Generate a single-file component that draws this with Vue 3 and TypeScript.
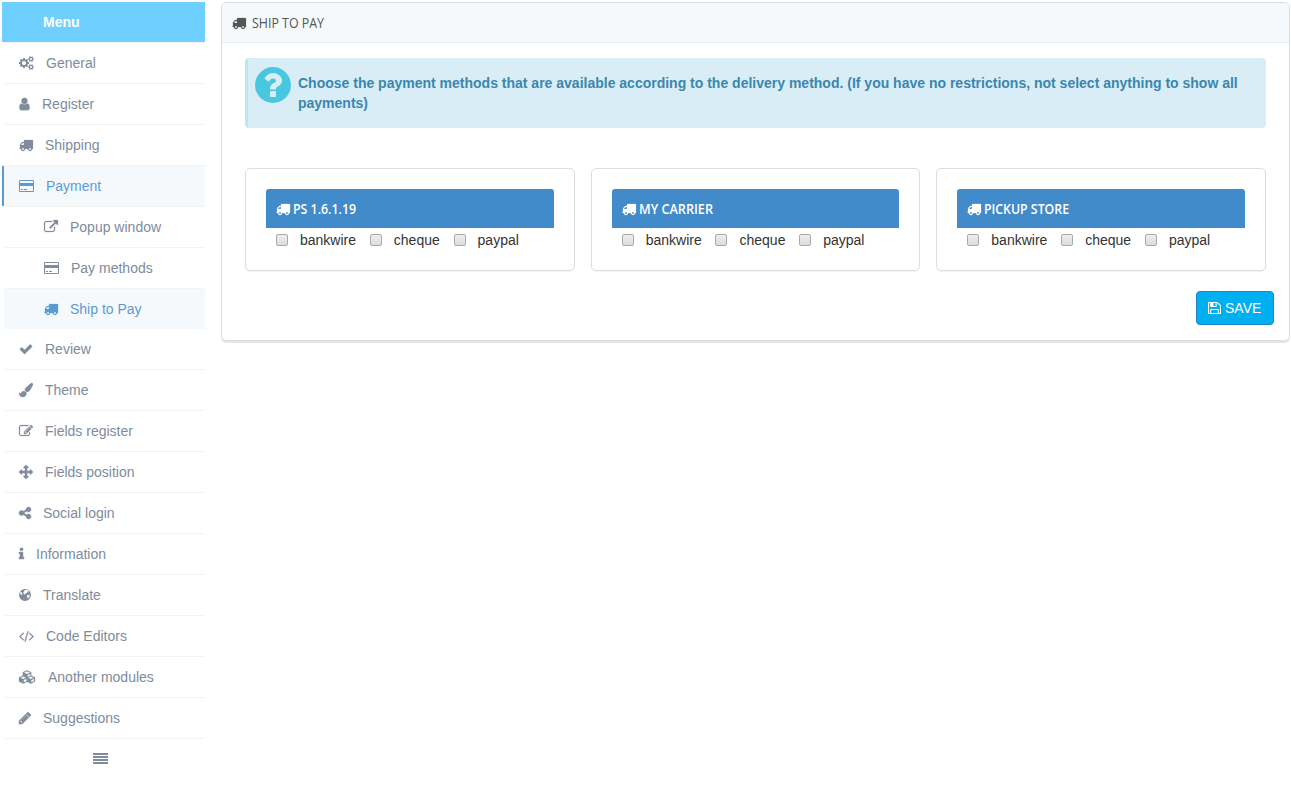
<script setup lang="ts">
import { ref } from 'vue'

interface Glyph { box: string; w: number; d: string }
interface Item { icon: string; label: string; state?: string }

const glyphs: Record<string, Glyph> = {
  truck: { box: '0 0 1792 1792', w: 14, d: 'M640 1408q0-52-38-90t-90-38-90 38-38 90 38 90 90 38 90-38 38-90zm-384-512h384v-256h-158q-13 0-22 9l-195 195q-9 9-9 22v30zm1280 512q0-52-38-90t-90-38-90 38-38 90 38 90 90 38 90-38 38-90zm256-1088v1024q0 15-4 26.5t-13.5 18.5-16.5 11.5-23.5 6-22.5 2-25.5 0-22.5-.5q0 106-75 181t-181 75-181-75-75-181h-384q0 106-75 181t-181 75-181-75-75-181h-64q-3 0-22.5.5t-25.5 0-22.5-2-23.5-6-16.5-11.5-13.5-18.5-4-26.5q0-26 19-45t45-19v-320q0-8-.5-35t0-38 2.5-34.5 6.5-37 14-30.5 22.5-30l198-198q19-19 50.5-32t58.5-13h160v-192q0-26 19-45t45-19h1024q26 0 45 19t19 45z' },
  user: { box: '210 60 1372 1680', w: 11, d: 'M1536 1399q0 109-62.5 187t-150.5 78h-854q-88 0-150.5-78t-62.5-187q0-85 8.5-160.5t31.5-152 58.5-131 94-89 134.5-34.5q131 128 313 128t313-128q76 0 134.5 34.5t94 89 58.5 131 31.5 152 8.5 160.5zm-256-887q0 159-112.5 271.5t-271.5 112.5-271.5-112.5-112.5-271.5 112.5-271.5 271.5-112.5 271.5 112.5 112.5 271.5z' },
  check: { box: '0 0 1792 1792', w: 14, d: 'M1671 566q0 40-28 68l-724 724-136 136q-28 28-68 28t-68-28l-136-136-362-362q-28-28-28-68t28-68l136-136q28-28 68-28t68 28l294 295 656-657q28-28 68-28t68 28l136 136q28 28 28 68z' },
  cogs: { box: '0 0 1920 1792', w: 15, d: 'M896 896q0-106-75-181t-181-75-181 75-75 181 75 181 181 75 181-75 75-181zm768 512q0-52-38-90t-90-38-90 38-38 90q0 53 37.5 90.5t90.5 37.5 90.5-37.5 37.5-90.5zm0-1024q0-52-38-90t-90-38-90 38-38 90q0 53 37.5 90.5t90.5 37.5 90.5-37.5 37.5-90.5zm-384 421v185q0 10-7 19.5t-16 10.5l-155 24q-11 35-32 76 34 48 90 115 7 11 7 20 0 12-7 19-23 30-82.5 89.5t-78.5 59.5q-11 0-21-7l-115-90q-37 19-77 31-11 108-23 155-7 24-30 24h-186q-11 0-20-7.5t-10-17.5l-23-153q-34-10-75-31l-118 89q-7 7-20 7-11 0-21-8-144-133-144-160 0-9 7-19 10-14 41-53t47-61q-23-44-35-82l-152-24q-10-1-17-9.5t-7-19.5v-185q0-10 7-19.5t16-10.5l155-24q11-35 32-76-34-48-90-115-7-11-7-20 0-12 7-20 22-30 82-89t79-59q11 0 21 7l115 90q34-18 77-32 11-108 23-154 7-24 30-24h186q11 0 20 7.5t10 17.5l23 153q34 10 75 31l118-89q8-7 20-7 11 0 21 8 144 133 144 160 0 8-7 19-12 16-42 54t-45 60q23 48 34 82l152 23q10 2 17 10.5t7 19.5zm640 533v140q0 16-149 31-12 27-30 52 51 113 51 138 0 4-4 7-122 71-124 71-8 0-46-47t-52-68q-20 2-30 2t-30-2q-14 21-52 68t-46 47q-2 0-124-71-4-3-4-7 0-25 51-138-18-25-30-52-149-15-149-31v-140q0-16 149-31 13-29 30-52-51-113-51-138 0-4 4-7 4-2 35-20t59-34 30-16q8 0 46 46.5t52 67.5q20-2 30-2t30 2q51-71 92-112l6-2q4 0 124 70 4 3 4 7 0 25-51 138 17 23 30 52 149 15 149 31zm0-1024v140q0 16-149 31-12 27-30 52 51 113 51 138 0 4-4 7-122 71-124 71-8 0-46-47t-52-68q-20 2-30 2t-30-2q-14 21-52 68t-46 47q-2 0-124-71-4-3-4-7 0-25 51-138-18-25-30-52-149-15-149-31v-140q0-16 149-31 13-29 30-52-51-113-51-138 0-4 4-7 4-2 35-20t59-34 30-16q8 0 46 46.5t52 67.5q20-2 30-2t30 2q51-71 92-112l6-2q4 0 124 70 4 3 4 7 0 25-51 138 17 23 30 52 149 15 149 31z' },
  credit: { box: '0 0 1920 1792', w: 15, d: 'M1760 128q66 0 113 47t47 113v1216q0 66-47 113t-113 47h-1600q-66 0-113-47t-47-113v-1216q0-66 47-113t113-47h1600zm-1600 128q-13 0-22.5 9.5t-9.5 22.5v224h1664v-224q0-13-9.5-22.5t-22.5-9.5h-1600zm1600 1280q13 0 22.5-9.5t9.5-22.5v-608h-1664v608q0 13 9.5 22.5t22.5 9.5h1600zm-1504-128v-128h256v128h-256zm384 0v-128h384v128h-384z' },
  external: { box: '0 0 1792 1792', w: 14, d: 'M1408 928v320q0 119-84.5 203.5t-203.5 84.5h-832q-119 0-203.5-84.5t-84.5-203.5v-832q0-119 84.5-203.5t203.5-84.5h704q14 0 23 9t9 23v64q0 14-9 23t-23 9h-704q-66 0-113 47t-47 113v832q0 66 47 113t113 47h832q66 0 113-47t47-113v-320q0-14 9-23t23-9h64q14 0 23 9t9 23zm384-864v512q0 26-19 45t-45 19-45-19l-176-176-652 652q-10 10-23 10t-23-10l-114-114q-10-10-10-23t10-23l652-652-176-176q-19-19-19-45t19-45 45-19h512q26 0 45 19t19 45z' },
  brush: { box: '0 0 1792 1792', w: 14, d: 'M1615 0q70 0 122.5 46.5t52.5 116.5q0 63-45 151-332 629-465 752-97 91-218 91-126 0-216.5-92.5t-90.5-219.5q0-128 92-212l638-579q59-54 130-54zm-909 1034q39 76 106.5 130t150.5 76l1 71q4 213-129.5 347t-348.5 134q-123 0-218-46.5t-152.5-127.5-86.5-183-29-220q7 5 41 30t62 44.5 59 36.5 46 17q41 0 55-37 25-66 57.5-112.5t69.5-76 88-47.5 103-25.5 125-10.5z' },
  edit: { box: '0 0 1792 1792', w: 14, d: 'M888 1184l116-116-152-152-116 116v56h96v96h56zm440-720q-16-16-33 1l-350 350q-17 17-1 33t33-1l350-350q17-17 1-33zm80 594v190q0 119-84.5 203.5t-203.5 84.5h-832q-119 0-203.5-84.5t-84.5-203.5v-832q0-119 84.5-203.5t203.5-84.5h832q63 0 117 25 15 7 18 23 3 17-9 29l-49 49q-14 14-32 8-23-6-45-6h-832q-66 0-113 47t-47 113v832q0 66 47 113t113 47h832q66 0 113-47t47-113v-126q0-13 9-22l64-64q15-15 35-7t20 29zm-96-738l288 288-672 672h-288v-288zm444 132l-92 92-288-288 92-92q28-28 68-28t68 28l152 152q28 28 28 68t-28 68z' },
  arrows: { box: '0 0 1792 1792', w: 14, d: 'M1792 896q0 26-19 45l-256 256q-19 19-45 19t-45-19-19-45v-128h-384v384h128q26 0 45 19t19 45-19 45l-256 256q-19 19-45 19t-45-19l-256-256q-19-19-19-45t19-45 45-19h128v-384h-384v128q0 26-19 45t-45 19-45-19l-256-256q-19-19-19-45t19-45l256-256q19-19 45-19t45 19 19 45v128h384v-384h-128q-26 0-45-19t-19-45 19-45l256-256q19-19 45-19t45 19l256 256q19 19 19 45t-19 45-45 19h-128v384h384v-128q0-26 19-45t45-19 45 19l256 256q19 19 19 45z' },
  share: { box: '128 0 1536 1792', w: 12, d: 'M1344 1024q133 0 226.5 93.5t93.5 226.5-93.5 226.5-226.5 93.5-226.5-93.5-93.5-226.5q0-12 2-34l-360-180q-92 86-218 86-133 0-226.5-93.5t-93.5-226.5 93.5-226.5 226.5-93.5q126 0 218 86l360-180q-2-22-2-34 0-133 93.5-226.5t226.5-93.5 226.5 93.5 93.5 226.5-93.5 226.5-226.5 93.5q-126 0-218-86l-360 180q2 22 2 34t-2 34l360 180q92-86 218-86z' },
  info: { box: '576 0 640 1792', w: 5, d: 'M1216 1344v128q0 26-19 45t-45 19h-512q-26 0-45-19t-19-45v-128q0-26 19-45t45-19h64v-384h-64q-26 0-45-19t-19-45v-128q0-26 19-45t45-19h384q26 0 45 19t19 45v576h64q26 0 45 19t19 45zm-128-1152v192q0 26-19 45t-45 19h-256q-26 0-45-19t-19-45v-192q0-26 19-45t45-19h256q26 0 45 19t19 45z' },
  globe: { box: '128 0 1536 1792', w: 12, d: 'M896 128a768 768 0 1 1 0 1536 768 768 0 1 1 0-1536zM860 250l300 10 190 110-60 160-140 20-60 130-130 20-60 130-170-90-60-180 110-120zM1180 880l270-20 60 150-130 250-140 60-80-220zM330 480l170 60-40 140 110 120-60 100-170-80-80-130z' },
  code: { box: '-64 0 1920 1792', w: 15, d: 'M553 1399l-50 50q-10 10-23 10t-23-10l-466-466q-10-10-10-23t10-23l466-466q10-10 23-10t23 10l50 50q10 10 10 23t-10 23l-393 393 393 393q10 10 10 23t-10 23zm591-1067l-373 1291q-4 13-15.5 19.5t-23.5 2.5l-62-17q-13-4-19.5-15.5t-2.5-24.5l373-1291q4-13 15.5-19.5t23.5-2.5l62 17q13 4 19.5 15.5t2.5 24.5zm657 651l-466 466q-10 10-23 10t-23-10l-50-50q-10-10-10-23t10-23l393-393-393-393q-10-10-10-23t10-23l50-50q10-10 23-10t23 10l466 466q10 10 10 23t-10 23z' },
  cubes: { box: '0 0 2304 1792', w: 17, d: 'M640 1632l384-192v-314l-384 164v342zm-64-454l404-173-404-173-404 173zm1088 454l384-192v-314l-384 164v342zm-64-454l404-173-404-173-404 173zm-448-293l384-165v-266l-384 164v267zm-64-379l441-189-441-189-441 189zm1088 518v416q0 36-19 67t-52 47l-448 224q-25 14-57 14t-57-14l-448-224q-4-2-7-4-2 2-7 4l-448 224q-25 14-57 14t-57-14l-448-224q-33-16-52-47t-19-67v-416q0-38 21.5-70t56.5-48l434-186v-400q0-38 21.5-70t56.5-48l448-192q23-10 50-10t50 10l448 192q35 16 56.5 48t21.5 70v400l434 186q36 16 57 48t21 70z' },
  pencil: { box: '128 0 1536 1792', w: 12, d: 'M491 1536l91-91-235-235-91 91v107h128v128h107zm523-928q0-22-22-22-10 0-17 7l-542 542q-7 7-7 17 0 22 22 22 10 0 17-7l542-542q7-7 7-17zm-54-192l416 416-832 832h-416v-416zm683 96q0 53-37 90l-166 166-416-416 166-165q36-38 90-38 53 0 91 38l235 234q37 39 37 91z' },
}

const items: Item[] = [
  { icon: 'cogs', label: 'General' },
  { icon: 'user', label: 'Register' },
  { icon: 'truck', label: 'Shipping' },
  { icon: 'credit', label: 'Payment', state: 'active' },
  { icon: 'external', label: 'Popup window', state: 'sub' },
  { icon: 'credit', label: 'Pay methods', state: 'sub' },
  { icon: 'truck', label: 'Ship to Pay', state: 'sub current' },
  { icon: 'check', label: 'Review', state: 'after-sub' },
  { icon: 'brush', label: 'Theme' },
  { icon: 'edit', label: 'Fields register' },
  { icon: 'arrows', label: 'Fields position' },
  { icon: 'share', label: 'Social login' },
  { icon: 'info', label: 'Information' },
  { icon: 'globe', label: 'Translate' },
  { icon: 'code', label: 'Code Editors' },
  { icon: 'cubes', label: 'Another modules' },
  { icon: 'pencil', label: 'Suggestions' },
]

const payments = ['bankwire', 'cheque', 'paypal']
const carriers = ref([
  { name: 'PS 1.6.1.19', width: 63, picked: [] as string[] },
  { name: 'MY CARRIER', width: 74, picked: [] as string[] },
  { name: 'PICKUP STORE', width: 85, picked: [] as string[] },
])
</script>

<template>
  <div class="page">
    <nav class="sidebar">
      <div class="menu-title">Menu</div>
      <a v-for="item in items" :key="item.label" class="item" :class="item.state">
        <svg class="icon" :class="'icon-' + item.icon" :width="glyphs[item.icon].w" height="14" :viewBox="glyphs[item.icon].box"><path fill-rule="evenodd" :d="glyphs[item.icon].d" /></svg>
        <span>{{ item.label }}</span>
      </a>
      <div class="collapse">
        <svg width="15" height="11" viewBox="0 0 15 11"><path d="M0 0h15v2H0zM0 3h15v2H0zM0 6h15v2H0zM0 9h15v2H0z" /></svg>
      </div>
    </nav>

    <main class="panel">
      <header class="panel-head">
        <svg class="icon icon-truck" width="14" height="14" :viewBox="glyphs.truck.box"><path :d="glyphs.truck.d" /></svg>
        <svg class="narrow" width="80" height="24"><text x="0" y="17" textLength="72" lengthAdjust="spacingAndGlyphs">SHIP TO PAY</text></svg>
      </header>
      <div class="alert">
        <svg class="help" width="36" height="36" viewBox="128 128 1536 1536"><path d="M1024 1376v-192q0-14-9-23t-23-9h-192q-14 0-23 9t-9 23v192q0 14 9 23t23 9h192q14 0 23-9t9-23zm256-672q0-88-55.5-163t-138.5-116-170-41q-243 0-371 213-15 24 8 42l132 100q7 6 19 6 16 0 25-12 53-68 86-92 34-24 86-24 48 0 85.5 26t37.5 59q0 38-20 61t-68 45q-63 28-115.5 86.5t-52.5 125.5v36q0 14 9 23t23 9h192q14 0 23-9t9-23q0-19 21.5-49.5t54.5-49.5q32-18 49-28.5t46-35 44.5-48 28-60.5 12.5-81zm384 192q0 209-103 385.5t-279.5 279.5-385.5 103-385.5-103-279.5-279.5-103-385.5 103-385.5 279.5-279.5 385.5-103 385.5 103 279.5 279.5 103 385.5z" /></svg>
        <p>Choose the payment methods that are available according to the delivery method. (If you have no restrictions, not select anything to show all payments)</p>
      </div>
      <div class="carriers">
        <section v-for="c in carriers" :key="c.name" class="card">
          <h3>
            <svg class="icon icon-truck" width="14" height="14" :viewBox="glyphs.truck.box"><path :d="glyphs.truck.d" /></svg>
            <svg class="narrow strong" :width="c.width + 8" height="24"><text x="0" y="17" :textLength="c.width" lengthAdjust="spacingAndGlyphs">{{ c.name }}</text></svg>
          </h3>
          <div class="options">
            <label v-for="p in payments" :key="p"><input v-model="c.picked" type="checkbox" :value="p"><span>{{ p }}</span></label>
          </div>
        </section>
      </div>
      <button class="save" type="button">
        <svg width="13" height="14" viewBox="128 0 1536 1792" preserveAspectRatio="none"><path d="M512 1536h768v-384h-768v384zm896 0h128v-896q0-14-10-38.5t-20-34.5l-281-281q-10-10-34-20t-39-10v416q0 40-28 68t-68 28h-576q-40 0-68-28t-28-68v-416h-128v1280h128v-416q0-40 28-68t68-28h832q40 0 68 28t28 68v416zm-384-928v-320q0-13-9.5-22.5t-22.5-9.5h-192q-13 0-22.5 9.5t-9.5 22.5v320q0 13 9.5 22.5t22.5 9.5h192q13 0 22.5-9.5t9.5-22.5zm640 32v928q0 40-28 68t-68 28h-1344q-40 0-68-28t-28-68v-1344q0-40 28-68t68-28h928q40 0 88 20t76 48l280 280q28 28 48 76t20 88z" /></svg>
        <span>SAVE</span>
      </button>
    </main>
  </div>
</template>

<style>
body { background: #fff; overflow: hidden; }
</style>

<style scoped>
.page { display: flex; align-items: flex-start; box-sizing: border-box; width: 1291px; height: 788px; padding: 2px 1px 0 2px; font: 14px/20px "Liberation Sans", Arial, sans-serif; color: #333; }
svg { display: block; flex: none; overflow: visible; fill: currentColor; }
.icon path { stroke: currentColor; stroke-width: 30px; }
.icon-check path, .icon-arrows path, .icon-share path, .icon-info path, .icon-pencil path { stroke-width: 60px; }
.icon-credit path, .icon-cogs path, .icon-globe path { stroke: none; }
.sidebar { width: 203px; margin-right: 16px; color: #808b9c; }
.menu-title { box-sizing: border-box; height: 40px; padding: 10px 0 0 41px; background: #6fcfff; color: #fff; font-weight: bold; }
.item { display: flex; align-items: center; gap: 12px; box-sizing: border-box; height: 41px; margin-left: 2px; padding-left: 15px; border-top: 1px solid #f1f3f5; }
.item.active { margin-left: 0; background: #f5f9fc; box-shadow: inset 2px 0 0 #5b9bd3; padding-left: 17px; color: #5b9bd3; }
.item.sub { padding-left: 40px; }
.item.current { background: #f5f9fc; color: #5b9bd3; }
.item.after-sub { height: 40px; border-top: 0; }
.collapse { margin-left: 2px; padding: 14px 0 0 89px; border-top: 1px solid #f1f3f5; }
.panel { box-sizing: border-box; width: 1069px; height: 339px; border: 1px solid #dcdddf; border-radius: 5px; box-shadow: 0 2px 0 rgba(0, 0, 0, .1); }
.panel-head { display: flex; align-items: center; box-sizing: border-box; height: 40px; padding-left: 10px; gap: 6px; border-bottom: 1px solid #eaedef; border-radius: 4px 4px 0 0; background: #f5f9fc; color: #555; }
.narrow { font: 15px/20px "Open Sans", "Noto Sans", sans-serif; }
.strong { font-weight: 600; }
.alert { display: flex; box-sizing: border-box; height: 70px; margin: 15px 23px 40px; padding: 9px 20px 0 7px; border-left: 3px solid #b8e9f1; border-radius: 4px; background: #d9edf7; color: #3a87ad; font-weight: bold; }
.help { color: #4ac7e0; }
.alert p { margin: 6px 0 0 7px; }
.carriers { display: grid; grid-template-columns: repeat(3, 1fr); gap: 16px; margin: 0 23px; }
.card { box-sizing: border-box; height: 103px; padding: 20px; border: 1px solid #dcdddf; border-radius: 5px; box-shadow: 0 1px 1px rgba(0, 0, 0, .05); }
h3 { display: flex; align-items: center; gap: 3px; height: 39px; margin: 0; padding-left: 10px; border-radius: 3px 3px 0 0; background: #428bca; color: #fff; }
.options { display: flex; gap: 13.8px; padding: 2px 0 0 10px; }
label { display: flex; align-items: center; }
input { appearance: none; width: 12px; height: 12px; margin: 0 12px 0 0; border: 1px solid #a9a9a9; border-radius: 2px; background: linear-gradient(#eee, #dcdcdc); }
input:checked { background: #428bca; }
.save { display: flex; align-items: center; gap: 4px; box-sizing: border-box; width: 78px; height: 34px; margin: 20px 15px 0 auto; padding: 0 0 0 11px; border: 1px solid #2382cc; border-radius: 4px; background: #00aff0; color: #fff; font: 14px/20px "Liberation Sans", Arial, sans-serif; }
</style>
